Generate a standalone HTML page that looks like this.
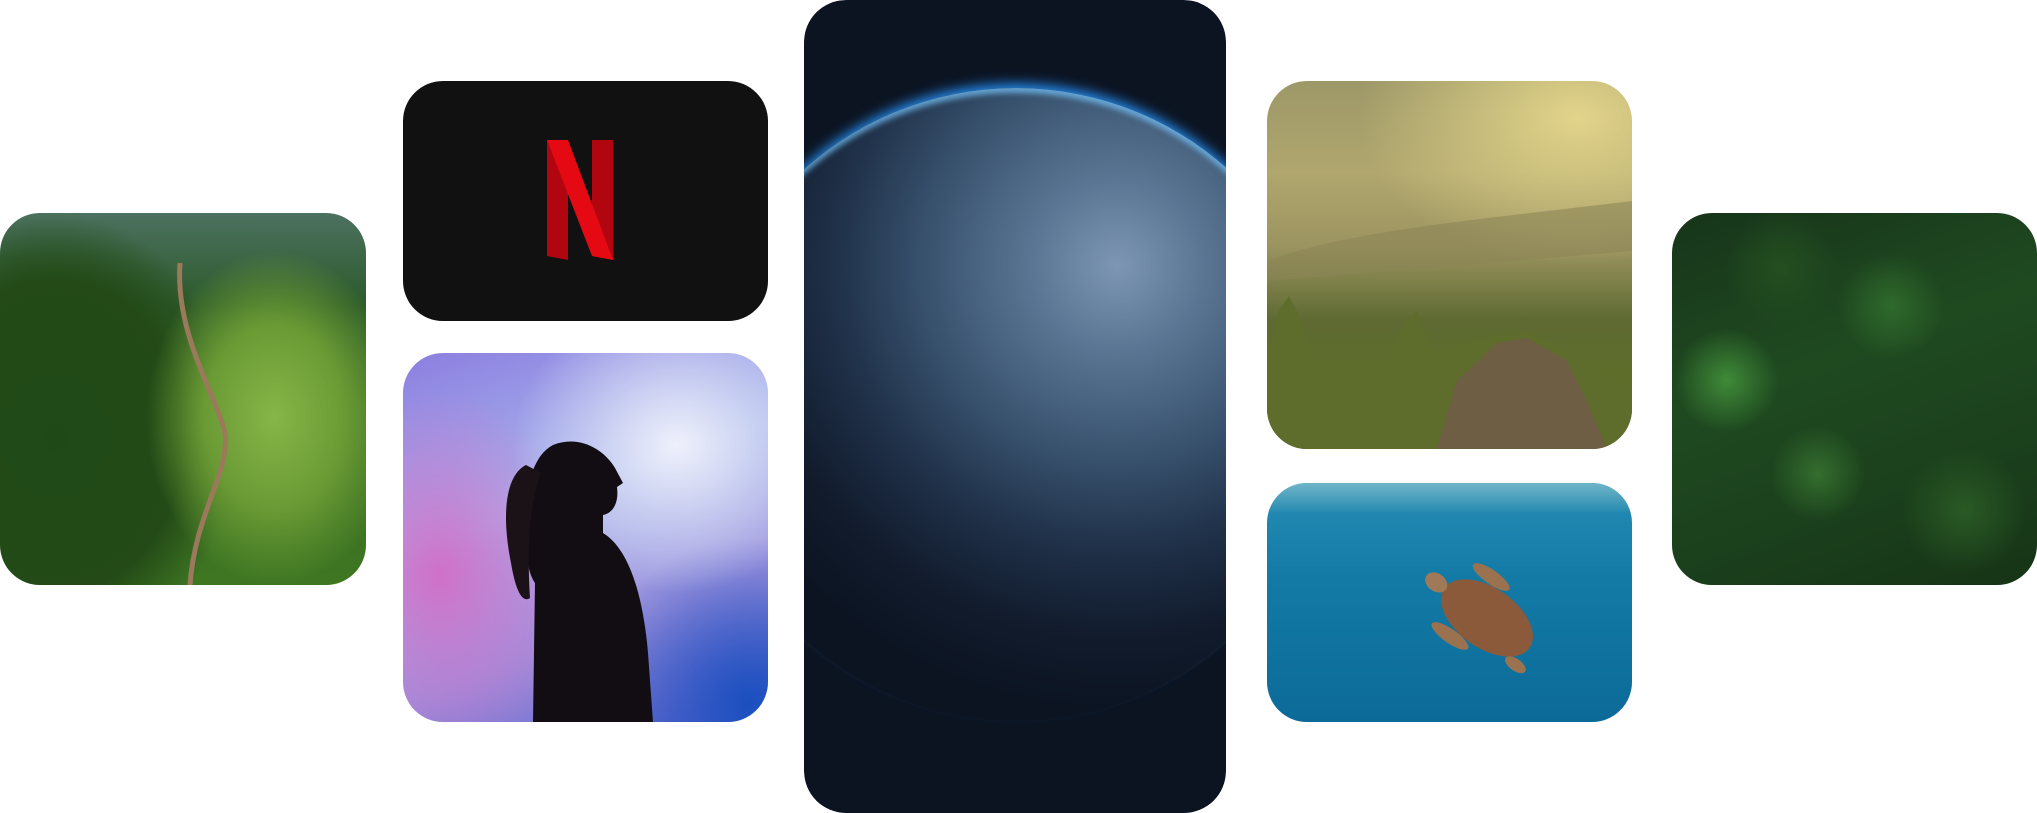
<!DOCTYPE html>
<html><head><meta charset="utf-8"><style>
html,body{margin:0;padding:0;background:#fff;overflow:hidden;width:2037px;height:813px;}
body{position:relative;font-family:"Liberation Sans",sans-serif;}
.c{position:absolute;border-radius:40px;overflow:hidden;}
</style></head><body>

<!-- left mountain -->
<div class="c" style="left:0;top:213px;width:366px;height:372px;background:
radial-gradient(ellipse 35% 45% at 75% 55%,#86b548 0%,#6a9a34 55%,transparent 100%),
radial-gradient(ellipse 50% 60% at 15% 60%,#1f4a17 0%,#234a17 70%,transparent 100%),
linear-gradient(180deg,#4c7160 0%,#2c5a2a 25%,#3a6e24 55%,#3e7622 100%);">
<svg width="366" height="372" style="position:absolute;left:0;top:0"><path d="M180 50 C175 120 215 180 225 220 C230 260 195 300 190 372" stroke="#9a7a5a" stroke-width="5" fill="none"/></svg>
</div>

<!-- netflix -->
<div class="c" style="left:403px;top:81px;width:365px;height:240px;background:#111;">
<svg width="66" height="120" viewBox="0 0 66 120" style="position:absolute;left:144px;top:59px">
<polygon points="0,0 21,0 21,120 0,116" fill="#b1060f"/>
<polygon points="45,0 66,0 66,120 45,116" fill="#b1060f"/>
<polygon points="0,0 21,0 66,120 45,116" fill="#e50914"/>
</svg>
</div>

<!-- woman -->
<div class="c" style="left:403px;top:353px;width:365px;height:369px;background:
radial-gradient(ellipse 45% 40% at 75% 25%,#eef0fb 0%,rgba(220,225,245,0.6) 50%,transparent 100%),
radial-gradient(ellipse 40% 50% at 10% 60%,#d070c8 0%,transparent 100%),
radial-gradient(ellipse 45% 45% at 95% 95%,#1a4fc0 0%,transparent 100%),
linear-gradient(160deg,#8c7ee0 0%,#a9b8ee 40%,#9c8fdc 70%,#5b5ec8 100%);">
<svg width="365" height="369" style="position:absolute;left:0;top:0">
<path d="M130 369 L132 230 C125 220 122 200 125 185 C120 150 125 105 150 92 C175 82 200 95 212 115 L220 130 L214 134 C216 150 210 160 200 162 L200 180 C225 195 240 240 245 300 L250 369 Z" fill="#120d12"/>
<path d="M123 112 C103 122 98 160 108 210 C113 240 120 250 127 245 C124 200 126 150 138 120 Z" fill="#1a1216"/>
</svg>
</div>

<!-- earth -->
<div class="c" style="left:804px;top:0;width:422px;height:813px;border-radius:42px;background:#0c1422;clip-path:inset(0 round 42px);">
<div style="position:absolute;left:-105px;top:88px;width:634px;height:634px;border-radius:50%;background:
radial-gradient(circle at 66% 28%,#7c96b3 0%,#5a7593 14%,#3a5470 30%,#1f3048 46%,#111b2c 60%,#0c1422 72%);
box-shadow:0 -8px 12px -4px rgba(40,150,255,0.95), inset 0 5px 6px rgba(120,200,255,0.7);"></div>
</div>

<!-- yellow mountains -->
<div class="c" style="left:1267px;top:81px;width:365px;height:368px;background:
radial-gradient(ellipse 60% 40% at 85% 10%,#e2d48a 0%,transparent 100%),
linear-gradient(180deg,#9d9868 0%,#b0a66e 25%,#9c9460 45%,#5e6a32 65%,#5f6e28 85%,#4a4a24 100%);">
<svg width="365" height="368" style="position:absolute;left:0;top:0">
<path d="M0 180 C80 150 200 140 365 120 L365 170 C250 180 120 190 0 200Z" fill="#8c8656" opacity="0.6"/>
<path d="M0 280 L12 230 L22 215 L35 240 L45 280 L120 280 L140 240 L150 230 L165 270 L200 262 L230 255 L260 252 L290 265 L330 290 L365 300 L365 368 L0 368Z" fill="#5e6c2c"/>
<path d="M170 368 L190 300 L230 262 L260 257 L300 280 L320 320 L340 368Z" fill="#6d5e44"/>
</svg>
</div>

<!-- turtle -->
<div class="c" style="left:1267px;top:483px;width:365px;height:239px;background:
linear-gradient(180deg,#2f8fb2 0%,#1f86b0 15%,#137aa6 40%,#0c6a98 100%);">
<div style="position:absolute;left:0;top:0;width:365px;height:30px;background:linear-gradient(180deg,#6fb4c8,rgba(47,143,178,0));"></div>
<svg width="365" height="239" style="position:absolute;left:0;top:0">
<g transform="translate(220,135) rotate(35)"><ellipse cx="0" cy="0" rx="52" ry="30" fill="#8a5a3a"/><ellipse cx="-62" cy="0" rx="12" ry="9" fill="#a07a58"/><ellipse cx="-20" cy="-36" rx="22" ry="7" fill="#9a7250"/><ellipse cx="-20" cy="36" rx="22" ry="7" fill="#9a7250"/><ellipse cx="50" cy="22" rx="12" ry="6" fill="#9a7250"/></g>
</svg>
</div>

<!-- forest -->
<div class="c" style="left:1672px;top:213px;width:365px;height:372px;background:
radial-gradient(circle at 15% 45%,#3f8a38 0%,transparent 14%),
radial-gradient(circle at 60% 25%,#2f6a2c 0%,transparent 15%),
radial-gradient(circle at 80% 80%,#2a5a25 0%,transparent 15%),
radial-gradient(circle at 40% 70%,#346e2e 0%,transparent 14%),
radial-gradient(circle at 30% 15%,#244f20 0%,transparent 14%),
linear-gradient(160deg,#17351a 0%,#1f4a20 40%,#1b401c 70%,#163416 100%);">
</div>

</body></html>
